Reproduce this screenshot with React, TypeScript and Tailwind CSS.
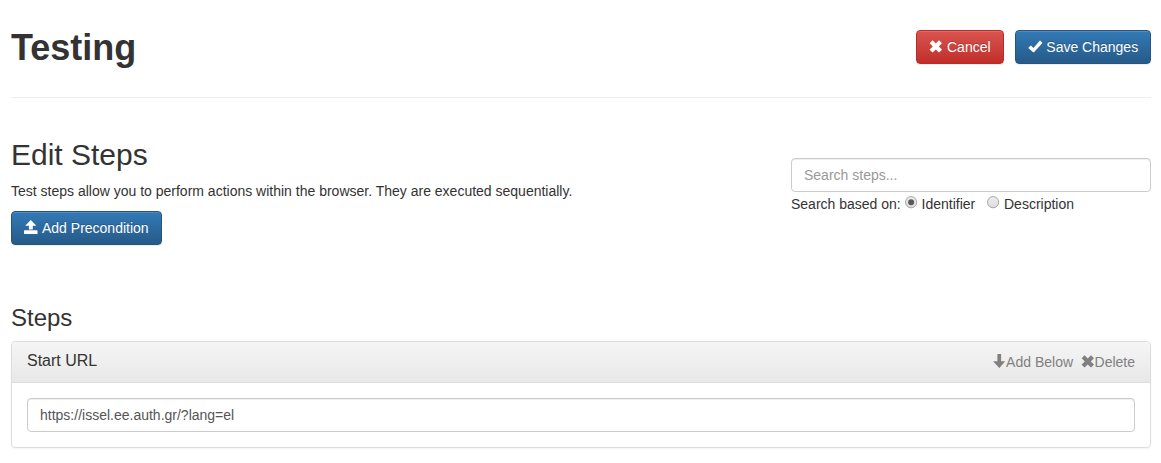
import { useState } from 'react';
import type { ReactNode } from 'react';

const paths = {
  remove: 'M3.9.5Q3.6.2 3.3.5L.9 2.9Q.6 3.2.9 3.5L3.8 6.4.9 9.3Q.6 9.6.9 9.9L3.3 12.3Q3.6 12.6 3.9 12.3L6.8 9.4 9.7 12.3Q10 12.6 10.3 12.3L12.7 9.9Q13 9.6 12.7 9.3L9.8 6.4 12.7 3.5Q13 3.2 12.7 2.9L10.3.5Q10 .2 9.7.5L6.8 3.4Z',
  ok: 'M.6 7.6 2.5 5.7Q2.8 5.4 3.1 5.7L5.5 7.9 11.7.7Q12 .4 12.3.7L14.2 2.6Q14.4 2.9 14.2 3.2L6 12.2Q5.6 12.5 5.2 12.2L.6 8.2Q.3 7.9.6 7.6Z',
  upload: 'M6.8 0 12.4 5.7H8.8V9.4H4.9V5.7H1.2ZM.5 10.2H13Q13.5 10.2 13.5 10.7V13.5Q13.5 14 13 14H.5Q0 14 0 13.5V10.7Q0 10.2.5 10.2Z',
  down: 'M5.4 0H9.1V7.2H12.6Q13.1 7.4 12.8 7.8L7.6 13.8Q7.3 14.1 7 13.8L1.5 7.8Q1.2 7.4 1.7 7.2H5.4Z',
};

function Icon({ name, className = '' }: { name: keyof typeof paths; className?: string }) {
  return (
    <svg viewBox="0 0 14 14" className={`h-3.5 w-3.5 shrink-0 overflow-visible fill-current ${className}`} aria-hidden="true">
      <path d={paths[name]} />
    </svg>
  );
}

function Button({
  icon,
  danger,
  className,
  children,
}: {
  icon: keyof typeof paths;
  danger?: boolean;
  className: string;
  children: ReactNode;
}) {
  const tone = danger
    ? 'border-[#b92c28] from-[#d9534f] to-[#c12e2a]'
    : 'border-[#245580] from-[#337ab7] to-[#265a88]';
  return (
    <button
      type="button"
      className={`flex h-[34px] items-center whitespace-nowrap rounded border bg-linear-to-b pl-3 text-white shadow-[inset_0_1px_0_rgba(255,255,255,0.15),0_1px_1px_rgba(0,0,0,0.075)] [text-shadow:0_-1px_0_rgba(0,0,0,0.2)] ${tone} ${className}`}
    >
      <Icon name={icon} className={icon === 'upload' ? 'mb-0.5' : ''} />
      {children}
    </button>
  );
}

function Radio({
  label,
  checked,
  onChange,
  className,
}: {
  label: string;
  checked: boolean;
  onChange: () => void;
  className: string;
}) {
  return (
    <label className={`flex items-start ${className}`}>
      <input type="radio" className="sr-only" checked={checked} onChange={onChange} />
      <svg viewBox="0 0 13 13" className="mt-[2px] h-[13px] w-[13px] shrink-0" aria-hidden="true">
        <defs>
          <linearGradient id="radio-face" x2="0" y2="1">
            <stop stopColor="#eeeeee" />
            <stop offset="1" stopColor="#dcdcdc" />
          </linearGradient>
        </defs>
        <circle cx="6.1" cy="6.2" r="5.6" fill="url(#radio-face)" stroke="#a6a6a6" />
        {checked && <circle cx="6.1" cy="6.2" r="3" fill="#5a5a5a" />}
      </svg>
      {label}
    </label>
  );
}

const inputClass =
  'block h-[34px] w-full rounded border border-[#ccc] bg-white px-3 text-[#555] shadow-[inset_0_1px_1px_rgba(0,0,0,0.075)] outline-none placeholder:text-[#999]';

export default function App() {
  const [mode, setMode] = useState('Identifier');
  return (
    <main className="h-[463px] bg-white pl-[11px] pr-2.5 font-['Liberation_Sans',Arial,sans-serif] text-[14px] leading-5 text-[#333]">
      <header className="flex h-[98px] items-start justify-between border-b border-[#eee]">
        <h1 className="pt-7 text-[36px] font-bold leading-10">Testing</h1>
        <div className="flex gap-[11px] pt-[30px]">
          <Button icon="remove" danger className="w-[88px] gap-1">Cancel</Button>
          <Button icon="ok" className="w-[136px] gap-[4.3px]">Save Changes</Button>
        </div>
      </header>

      <section className="flex h-[207px] justify-between">
        <div className="flex flex-col items-start pt-10">
          <h2 className="text-[30px] leading-[33px]">Edit Steps</h2>
          <p className="mb-2.5 mt-2.5">
            Test steps allow you to perform actions within the browser. They are executed sequentially.
          </p>
          <Button icon="upload" className="w-[151px] gap-1">Add Precondition</Button>
        </div>
        <div className="w-[360px] pt-[60px]">
          <input className={inputClass} placeholder="Search steps..." />
          <div className="mt-0.5 flex">
            <span className="w-[114px]">Search based on:</span>
            <Radio
              label="Identifier"
              className="w-[82px] gap-[3.5px]"
              checked={mode === 'Identifier'}
              onChange={() => setMode('Identifier')}
            />
            <Radio
              label="Description"
              className="gap-1"
              checked={mode === 'Description'}
              onChange={() => setMode('Description')}
            />
          </div>
        </div>
      </section>

      <section>
        <h3 className="mb-2.5 text-[24px] leading-[26px]">Steps</h3>
        <div className="h-[107px] rounded border border-[#ddd] shadow-[0_1px_2px_rgba(0,0,0,0.05)]">
          <div className="flex h-[41px] justify-between rounded-t-[3px] border-b border-[#ddd] bg-linear-to-b from-[#f5f5f5] to-[#e8e8e8] px-[15px]">
            <h4 className="pt-[9px] text-[16px] leading-5">Start URL</h4>
            <div className="flex items-start gap-[7.5px] pt-2.5 text-[#808080]">
              <button type="button" className="flex"><Icon name="down" className="mt-0.5" />Add Below</button>
              <button type="button" className="flex"><Icon name="remove" className="mt-[3px]" />Delete</button>
            </div>
          </div>
          <div className="p-[15px]">
            <input className={inputClass} defaultValue="https://issel.ee.auth.gr/?lang=el" />
          </div>
        </div>
      </section>
    </main>
  );
}
